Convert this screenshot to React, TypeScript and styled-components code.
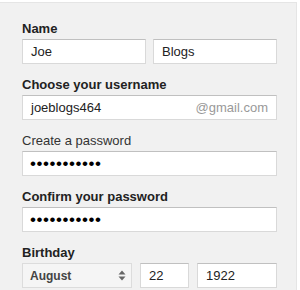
import React from 'react';
import styled, { createGlobalStyle } from 'styled-components';

const GlobalStyle = createGlobalStyle`
    body {
        margin: 0;
        background: #fff;
        font-family: "Liberation Sans", Arial, sans-serif;
        overflow: hidden;
    }
`;

const Panel = styled.div`
    margin-top: 2px;
    width: 255px;
    height: 269px;
    background: #f1f1f1;
    border-top: 1px solid #e5e5e5;
    border-right: 1px solid #e5e5e5;
    padding: 18px 19px 0 22px;
`;

const Section = styled.div`
    margin-bottom: 13px;
`;

const Label = styled.div<{ $light?: boolean }>`
    font-size: 13px;
    line-height: 16px;
    font-weight: ${p => (p.$light ? 'normal' : 'bold')};
    color: ${p => (p.$light ? '#333' : '#222')};
    margin-bottom: 2px;
`;

const Row = styled.div<{ $cols: string; $gap: number }>`
    display: grid;
    grid-template-columns: ${p => p.$cols};
    column-gap: ${p => p.$gap}px;
`;

const Field = styled.div`
    height: 25px;
    box-sizing: border-box;
    background: #fff;
    border: 1px solid #d9d9d9;
    border-top-color: #c0c0c0;
    padding: 0 8px;
    display: flex;
    align-items: center;
    justify-content: space-between;
    font-size: 13px;
    color: #222;
`;

const Suffix = styled.span`
    color: #999;
`;

const Dots = styled.span`
    font-size: 17px;
    letter-spacing: 0.55px;
    color: #000;
    margin-left: -1px;
`;

const Select = styled.div`
    height: 25px;
    box-sizing: border-box;
    background: #f5f5f5;
    border: 1px solid #dcdcdc;
    padding: 0 5px 0 7px;
    display: flex;
    align-items: center;
    justify-content: space-between;
    font-size: 12px;
    font-weight: bold;
    color: #444;
`;

const Arrows = () => (
    <svg width="8" height="11" viewBox="0 0 8 11">
        <path d="M4 0.5 L7.5 4.5 L0.5 4.5 Z" fill="#666" />
        <path d="M4 10.5 L7.5 6.5 L0.5 6.5 Z" fill="#666" />
    </svg>
);

export default function App() {
    return (
        <>
            <GlobalStyle />
            <Panel>
                <Section>
                    <Label>Name</Label>
                    <Row $cols="124px 124px" $gap={7}>
                        <Field>Joe</Field>
                        <Field>Blogs</Field>
                    </Row>
                </Section>
                <Section>
                    <Label>Choose your username</Label>
                    <Field>
                        <span>joeblogs464</span>
                        <Suffix>@gmail.com</Suffix>
                    </Field>
                </Section>
                <Section>
                    <Label $light>Create a password</Label>
                    <Field>
                        <Dots>•••••••••••</Dots>
                    </Field>
                </Section>
                <Section>
                    <Label>Confirm your password</Label>
                    <Field>
                        <Dots>•••••••••••</Dots>
                    </Field>
                </Section>
                <Section>
                    <Label>Birthday</Label>
                    <Row $cols="110px 49px 1fr" $gap={8}>
                        <Select>
                            <span>August</span>
                            <Arrows />
                        </Select>
                        <Field>22</Field>
                        <Field>1922</Field>
                    </Row>
                </Section>
            </Panel>
        </>
    );
}
